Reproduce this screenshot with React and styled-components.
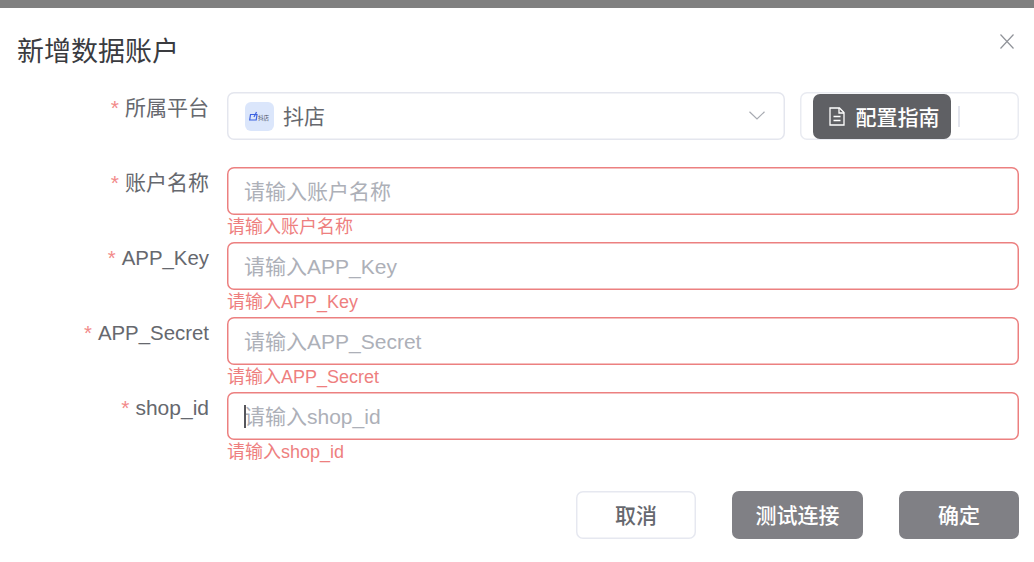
import React from 'react';
import styled, { createGlobalStyle } from 'styled-components';

const Global = createGlobalStyle`
  html, body { margin: 0; padding: 0; background: #fff; }
  body { font-family: "Liberation Sans", "Noto Sans CJK SC", sans-serif; overflow: hidden; }
  * { box-sizing: border-box; }
`;

const Page = styled.div`
  width: 1034px;
  height: 562px;
  display: flex;
  flex-direction: column;
  background: #fff;
`;
const TopBar = styled.div`
  height: 8px;
  flex: none;
  background: #808080;
`;
const Header = styled.header`
  height: 84px;
  flex: none;
  padding: 26px 20px 0 17px;
  display: flex;
  justify-content: space-between;
  align-items: flex-start;
`;
const Title = styled.h2`
  margin: 0;
  font-size: 27px;
  line-height: 36px;
  font-weight: 400;
  color: #3a3b3f;
`;
const CloseButton = styled.button`
  border: 0;
  background: none;
  padding: 0;
  width: 14px;
  height: 15px;
  display: flex;
  color: #909399;
`;
const Form = styled.form`
  display: flex;
  flex-direction: column;
  padding-right: 15px;
  margin: 0;
`;
const Row = styled.div`
  display: grid;
  grid-template-columns: 209px 1fr;
  column-gap: 18px;
  height: 75px;
`;
const Label = styled.label`
  text-align: right;
  font-size: ${p => (p.$latin ? '20.4px' : '21px')};
  line-height: 32px;
  color: #66686e;
`;
const Star = styled.span`
  color: #f28a8a;
  margin-right: 6px;
`;
const Field = styled.div`
  display: flex;
  flex-direction: column;
  position: relative;
`;
const InputBox = styled.input`
  width: 100%;
  height: 48px;
  flex: none;
  border: 0;
  box-shadow: inset 0 0 0 1.5px #ec8080;
  border-radius: 7px;
  padding: 2px 17px 0;
  font: inherit;
  font-size: 21px;
  color: #606266;
  outline: none;
  background: #fff;
  &::placeholder { color: #adb0b8; opacity: 1; }
`;
const Caret = styled.span`
  position: absolute;
  left: 17px;
  top: 13px;
  width: 2px;
  height: 23px;
  background: #55565c;
`;
const ErrorText = styled.div`
  font-size: 18px;
  line-height: 24px;
  color: #ee7f7f;
`;
const SelectRow = styled.div`
  display: flex;
  gap: 15px;
`;
const Select = styled.div`
  width: 558px;
  height: 48px;
  box-shadow: inset 0 0 0 1.5px #e4e6ee;
  border-radius: 7px;
  padding: 0 20px 2px 18px;
  display: flex;
  align-items: center;
  gap: 9px;
  font-size: 21px;
  color: #66686e;
`;
const SelectValue = styled.span`
  flex: 1;
`;
const Chevron = styled.svg`
  width: 16px;
  height: 9px;
  color: #a8abb2;
`;
const PlatformLogo = styled.svg`
  width: 29px;
  height: 29px;
  flex: none;
  margin-top: 2px;
`;
const GuideBox = styled.div`
  flex: 1;
  height: 48px;
  box-shadow: inset 0 0 0 1.5px #e9ebf1;
  border-radius: 7px;
  padding-left: 13px;
  display: flex;
  align-items: center;
`;
const GuideButton = styled.button`
  width: 138px;
  height: 45px;
  border: 0;
  border-radius: 7px;
  background: #5f6064;
  color: #fff;
  font: inherit;
  font-size: 21px;
  font-weight: 500;
  display: flex;
  align-items: center;
  justify-content: center;
  gap: 11px;
  padding: 0 0 0 4px;
`;
const Divider = styled.span`
  width: 1.5px;
  height: 21px;
  margin-left: 7px;
  background: #e4e6ee;
`;
const Footer = styled.footer`
  display: flex;
  justify-content: flex-end;
  gap: 36px;
  padding: 24px 15px 0 0;
`;
const Action = styled.button`
  height: 48px;
  width: ${p => p.$w}px;
  border-radius: 7px;
  border: 0;
  box-shadow: ${p => (p.$primary ? 'none' : 'inset 0 0 0 1.5px #e6e8f0')};
  background: ${p => (p.$primary ? '#808085' : '#fff')};
  color: ${p => (p.$primary ? '#fff' : '#66686e')};
  font: inherit;
  font-size: 21px;
  font-weight: 500;
  padding: 0 0 2px;
`;

const fields = [
  { label: '账户名称', ph: '请输入账户名称' },
  { label: 'APP_Key', ph: '请输入APP_Key', latin: true },
  { label: 'APP_Secret', ph: '请输入APP_Secret', latin: true },
  { label: 'shop_id', ph: '请输入shop_id', caret: true },
];

export default function App() {
  return (
    <Page>
      <Global />
      <TopBar />
      <Header>
        <Title>新增数据账户</Title>
        <CloseButton type="button" aria-label="关闭">
          <svg width="14" height="15" viewBox="0 0 14 15" fill="none" stroke="currentColor" strokeWidth="1.2">
            <path d="M.5.5l13 14M13.5.5l-13 14" />
          </svg>
        </CloseButton>
      </Header>
      <Form>
        <Row>
          <Label><Star>*</Star>所属平台</Label>
          <SelectRow>
            <Select>
              <PlatformLogo viewBox="0 0 29 29">
                <rect width="29" height="29" rx="6" fill="#dbe6fb" />
                <path d="M5.5 12.5h6.5l-.8 5.5H4.7z" fill="none" stroke="#3d62e0" strokeWidth="1.2" />
                <path d="M11.5 10l-2.5 5" stroke="#3d62e0" strokeWidth="1.2" />
                <text x="13" y="17.5" fontSize="5.5" fill="#4a4f63" fontFamily="Noto Sans CJK SC">抖店</text>
              </PlatformLogo>
              <SelectValue>抖店</SelectValue>
              <Chevron viewBox="0 0 16 9" fill="none" stroke="currentColor" strokeWidth="1.2">
                <path d="M.5 .8L8 8l7.5-7.2" />
              </Chevron>
            </Select>
            <GuideBox>
              <GuideButton type="button">
                <svg width="16" height="19" viewBox="0 0 16 19" fill="none" stroke="#fff" strokeWidth="1.3">
                  <path d="M1 1h9.5L15 5.5V18H1z" />
                  <path d="M10 1v5h5M4.5 9.5h7M4.5 13.5h7" />
                </svg>
                配置指南
              </GuideButton>
              <Divider />
            </GuideBox>
          </SelectRow>
        </Row>
        {fields.map(f => (
          <Row key={f.label}>
            <Label $latin={f.latin}><Star>*</Star>{f.label}</Label>
            <Field>
              <InputBox placeholder={f.ph} readOnly />
              {f.caret && <Caret />}
              <ErrorText>{f.ph}</ErrorText>
            </Field>
          </Row>
        ))}
      </Form>
      <Footer>
        <Action type="button" $w={120}>取消</Action>
        <Action type="button" $primary $w={131}>测试连接</Action>
        <Action type="button" $primary $w={120}>确定</Action>
      </Footer>
    </Page>
  );
}
